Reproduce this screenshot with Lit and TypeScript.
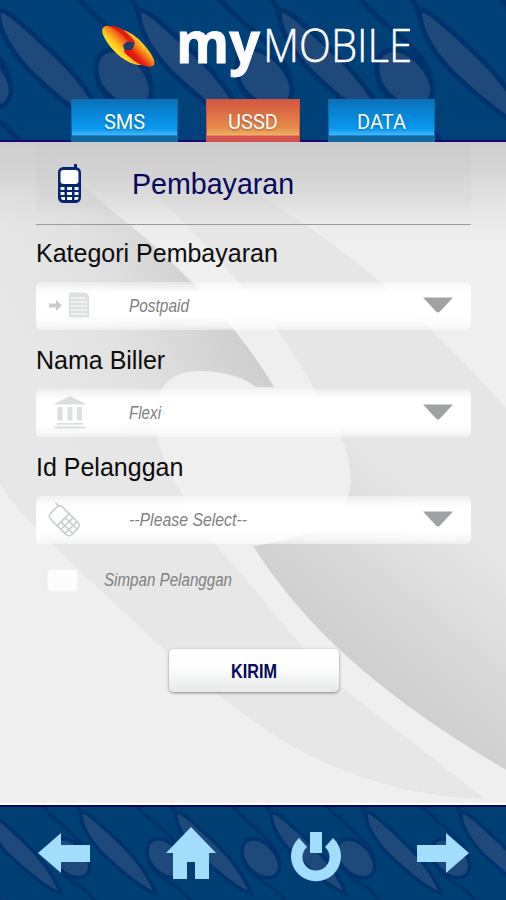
import { LitElement, html, svg, css } from "lit";
import { customElement, property } from "lit/decorators.js";

@customElement("leaf-pattern")
class LeafPattern extends LitElement {
  @property({ type: Number }) scale = 1;
  @property({ type: Number }) period = 140.5;
  @property({ type: Number }) dx = 0;
  @property({ type: Number }) dy = 0;

  static styles = css`
    :host { display: block; overflow: hidden; }
    svg { display: block; width: 100%; height: 100%; }
    .line { fill: none; stroke: #00326d; stroke-width: 5; }
    .leaf { fill: #20497b; stroke: #00326d; stroke-width: 5; }
  `;

  render() {
    return html`<svg aria-hidden="true">
      ${[-2, -1, 0, 1, 2, 3, 4, 5].map(
        (k) => svg`<g transform="translate(${this.dx + k * this.period} ${this.dy}) scale(${this.scale})">
          <path class="line" d="M-64 -16 C-50 0 -44 4 -34 13 C-18 27 4 44 9 66"/>
          <path class="line" d="M-43 70 C-34 88 -18 98 -2 108 C14 120 26 134 40 156"/>
          <path class="line" d="M-14 -18 C-6 -10 -3 -4 -2 4"/>
          <path class="leaf" d="M-2 -3 C5 -3 12 3 20 10 C44 32 88 66 109 118 C90 112 56 84 29 58 C10 38 -4 14 -2 -3 Z"/>
          <path class="leaf" d="M-45 56 C-46 38 -30 32 -14 41 C2 50 13 70 10 82 C6 99 -14 96 -27 87 C-38 79 -45 68 -45 56 Z"/>
        </g>`
      )}
    </svg>`;
  }
}

@customElement("slim-text")
class SlimText extends LitElement {
  @property() text = "";
  @property({ type: Number }) width = 60;
  static styles = css`
    :host { display: block; height: 26px; }
    svg { display: block; height: 26px; overflow: visible; }
    text { font: italic 18.5px "Liberation Sans", Arial, sans-serif; fill: #808080; }
  `;
  render() {
    return html`<svg width=${this.width}>
      <text x="0" y="18.500" textLength=${this.width} lengthAdjust="spacingAndGlyphs">${this.text}</text>
    </svg>`;
  }
}

const noteIcon = svg`
  <path fill="#c9cccc" d="M2 21.500h7v-3.500l6 5.500-6 5.500v-3.500H2z"/>
  <path fill="#dfe1e1" d="M22 10.500h17l3 3v22H22z"/>
  <path stroke="#f6f7f7" stroke-width="1.4" d="M24 16h14M24 20h16M24 24h16M24 28h16M24 32h16"/>`;
const bankIcon = svg`
  <path fill="#dcdfdf" d="M23 7 38 14.5v1H8v-1zM10.500 18h5v13.500h-5zM20.500 18h5v13.500h-5zM30 18h5v13.500h-5zM10 34h26v1.800H10zM7.500 37.500h31v2h-31z"/>`;
const mobileIcon = svg`
  <g transform="translate(15.500 23) rotate(-45)" fill="none" stroke="#cbcfcf" stroke-width="1.700">
    <rect x="-8.500" y="-12.500" width="17" height="30" rx="4"/>
    <path d="M-8 1H8M-8 6.500H8M-8 12H8M-3 1v16M3 1v16M6.500 -12.500v-4"/>
  </g>`;

const fields = [
  { label: "Kategori Pembayaran", value: "Postpaid", width: 60, icon: noteIcon },
  { label: "Nama Biller", value: "Flexi", width: 32, icon: bankIcon },
  { label: "Id Pelanggan", value: "--Please Select--", width: 118, icon: mobileIcon },
];

const tabs = [
  { name: "SMS", cls: "tab wide" },
  { name: "USSD", cls: "tab active" },
  { name: "DATA", cls: "tab wide" },
];

@customElement("app-root")
class AppRoot extends LitElement {
  static styles = css`
    :host {
      display: flex; flex-direction: column; width: 506px; height: 900px;
      overflow: hidden; background: #efefef;
      font-family: "Liberation Sans", Arial, sans-serif;
    }
    header { display: grid; height: 142px; background: #00417a; flex: none; }
    header > *, main > *, footer > * { grid-area: 1 / 1; min-width: 0; }
    .head { display: flex; flex-direction: column; justify-content: space-between; border-bottom: 2px solid #16086c; }
    .brand { width: 506px; height: 90px; display: block; }
    .my { font: 700 58px "Open Sans", "Noto Sans", sans-serif; fill: #fff; stroke: #fff; stroke-width: .8; }
    .mobile { font: 300 46px "Open Sans", "Noto Sans", sans-serif; fill: #fff; stroke: #fff; stroke-width: .5; }
    .tabs { display: flex; gap: 28px; padding-left: 71px; margin-bottom: -2px; }
    .tab {
      width: 94px; height: 43px; box-sizing: border-box; padding-top: 2px;
      font: 20px/43px Roboto, sans-serif; color: #fff; text-align: center;
      text-shadow: 0 1px 2px rgba(0, 0, 0, .3);
    }
    .wide { width: 107px; background: linear-gradient(#0a70b5 0, #0786d6 35%, #0598ee 68%, #3fb4fb 83%, #1169a4 86%, #1169a4 100%); box-shadow: inset 1px 0 #1169a4, inset -1px 0 #1169a4; }
    .active { background: linear-gradient(#d2563f 0, #dd7144 35%, #e68c49 68%, #edb063 83%, #d5534d 87%, #cf504f 100%); box-shadow: inset 1px 0 #cf504f, inset -1px 0 #cf504f; }
    main { display: grid; height: 661px; flex: none; }
    .swirl { display: block; width: 506px; height: 661px; }
    .form { display: flex; flex-direction: column; padding: 0 35px 0 36px; }
    .title {
      display: flex; align-items: center; height: 83px; box-sizing: border-box;
      border-bottom: 1.500px solid #999; padding-left: 20px; gap: 50px;
      background: linear-gradient(rgba(0,0,0,.01), rgba(0,0,0,.025) 75%, transparent 90%);
      font-size: 28.600px; color: #05075c;
    }
    .title svg { margin-top: 2px; }
    .title span { line-height: 83px; padding-top: 2px; }
    .group { height: 107px; }
    .label { height: 57px; line-height: 56px; font-size: 25px; color: #0c0c0c; white-space: nowrap; }
    .field {
      display: flex; align-items: center; height: 48px; box-sizing: border-box;
      padding: 0 18px 0 11px; border-radius: 5px;
      background: linear-gradient(rgba(255,255,255,.35), #fff 22%, #fff 70%, rgba(255,255,255,.7) 92%, rgba(255,255,255,.4));
    }
    .field slim-text { margin: 0 auto 0 37px; }
    .arrow { margin-top: -2px; }
    .check { display: flex; align-items: center; height: 68px; padding-left: 12px; gap: 27px; }
    .box { width: 29px; height: 21px; border-radius: 4px; background: #fcfcfc; box-shadow: 0 0 2px #fff; }
    .send {
      align-self: center; width: 170px; height: 43px; margin: 35px 0 0 0; padding: 0; border: 0;
      border-radius: 5px; background: linear-gradient(#fff, #fdfdfd 45%, #e7e9ea);
      box-shadow: 0 1px 3px rgba(0,0,0,.45);
    }
    .send svg { display: block; margin: 0 auto; overflow: visible; }
    .send text { font: 700 19.500px "Liberation Sans", Arial, sans-serif; fill: #05075c; }
    footer { display: grid; height: 97px; box-sizing: border-box; flex: none; border-top: 2px solid #fff; background: #003f73; }
    .nav { display: flex; align-items: center; justify-content: space-between; padding: 0 37px 1px 38px; border-top: 2px solid #060560; }
    .nav svg { fill: #a2ddfc; }
    .power { margin-top: 7px; }
  `;

  render() {
    return html`
      <header>
        <leaf-pattern .dx=${141} .dy=${13}></leaf-pattern>
        <div class="head">
          <svg class="brand">
            <defs>
              <linearGradient id="a" gradientUnits="userSpaceOnUse" x1="108" y1="48" x2="124" y2="32">
                <stop offset="0" stop-color="#fff22e"/><stop offset=".4" stop-color="#ffbe1e"/>
                <stop offset=".8" stop-color="#f0501a"/><stop offset="1" stop-color="#dc1410"/>
              </linearGradient>
              <linearGradient id="b" gradientUnits="userSpaceOnUse" x1="149" y1="46" x2="133" y2="62">
                <stop offset="0" stop-color="#fff22e"/><stop offset=".3" stop-color="#ffa01c"/>
                <stop offset=".7" stop-color="#e8200f"/><stop offset="1" stop-color="#d81010"/>
              </linearGradient>
            </defs>
            <path fill="url(#a)" d="M103 28 C106 23 120 27 129 36 L133 42 C127 40 122 44 124 49 L142 65 C129 66 114 53 107 42 C103 36 101 31 103 28Z"/>
            <path fill="#df1c10" d="M108 26 C120 25 131 33 137 43 L128 42 C126 36 117 30 108 26Z"/>
            <path fill="url(#b)" d="M123 30 C133 33 140 40 145 46 C151 53 156 61 154 65 C151 69 139 65 133 60 C129 56 124 54 124 50 L131 50 C134 47 134 45 135 42 C132 37 128 34 123 30Z"/>
            <path fill="#263b68" d="M123 45 L128 42 L131 43 L134 43 L132 49 L126 50Z"/>
            <text class="my" x="176" y="62.500" textLength="84" lengthAdjust="spacingAndGlyphs">my</text>
            <text class="mobile" x="263" y="62" textLength="149" lengthAdjust="spacingAndGlyphs">MOBILE</text>
          </svg>
          <div class="tabs">${tabs.map((t) => html`<div class=${t.cls}>${t.name}</div>`)}</div>
        </div>
      </header>
      <main>
        <svg class="swirl" viewBox="0 142 506 661" aria-hidden="true">
          <defs>
            <linearGradient id="l" gradientUnits="userSpaceOnUse" x1="20" y1="360" x2="220" y2="270">
              <stop offset="0" stop-color="#e8e8e8"/><stop offset=".45" stop-color="#e1e1e1"/><stop offset="1" stop-color="#cecece"/>
            </linearGradient>
            <linearGradient id="lf" gradientUnits="userSpaceOnUse" x1="0" y1="380" x2="0" y2="480">
              <stop offset="0" stop-color="#e7e7e7" stop-opacity="0"/><stop offset="1" stop-color="#e7e7e7"/>
            </linearGradient>
            <linearGradient id="r" gradientUnits="userSpaceOnUse" x1="325" y1="640" x2="440" y2="500">
              <stop offset="0" stop-color="#cfcfcf"/><stop offset=".5" stop-color="#dadada"/><stop offset="1" stop-color="#e6e6e6"/>
            </linearGradient>
            <linearGradient id="t" x1="0" y1="0" x2="0" y2="1">
              <stop offset="0" stop-color="#cecece"/><stop offset=".35" stop-color="#d4d4d4" stop-opacity=".85"/><stop offset="1" stop-color="#e6e6e6" stop-opacity="0"/>
            </linearGradient>
          </defs>
          <path fill="#efefef" d="M0 142H506V803H0Z"/>
          <path fill="url(#l)" d="M0 142H40C90 195 110 208 130 225C190 275 240 330 274 387L300 640C345 690 410 740 483 798C400 797 310 765 250 718C170 660 150 635 90 580C60 552 25 520 0 485Z"/>
          <path fill="url(#lf)" d="M0 380H270L300 640C345 690 410 740 483 798C400 797 310 765 250 718C170 660 150 635 90 580C60 552 25 520 0 485Z"/>
          <path fill="url(#r)" d="M120 160C190 228 270 305 313 387L332 430L330 520L253 546C300 620 370 690 506 770V408C440 335 370 265 290 215C260 195 240 180 190 142H120Z"/>
          <path fill="#efefef" d="M158 440C150 400 160 371 200 371C225 371 245 378 256 387H313C326 410 351 440 351 480C351 520 300 540 253 546C300 620 370 690 506 770V803H490L345 690C290 640 250 580 218 548C190 510 165 470 158 440Z"/>
          <rect y="142" width="506" height="105" fill="url(#t)"/>
        </svg>
        <div class="form">
          <div class="title">
            <svg width="26" height="42">
              <path fill="#06246f" d="M18 1h3v7h-3z"/>
              <rect x="2" y="4" width="23" height="36" rx="5.500" fill="#06246f"/>
              <rect x="4.500" y="7" width="18" height="14" rx="3" fill="#fff"/>
              <path fill="#f4f8ff" d="M4.500 24h4v3h-4zM11 24h5v3h-5zM18.500 24h4v3h-4zM4.500 29h4v3h-4zM11 29h5v3h-5zM18.500 29h4v3h-4zM5 34h4v3H7q-2 0-2-3zM11 34h5v3h-5zM18.500 34h4q0 3-2 3h-2z"/>
            </svg>
            <span>Pembayaran</span>
          </div>
          ${fields.map((f) => html`
            <div class="group">
              <div class="label">${f.label}</div>
              <div class="field">
                <svg width="45" height="48">${f.icon}</svg>
                <slim-text .text=${f.value} .width=${f.width}></slim-text>
                <svg class="arrow" width="30" height="16"><path fill="#a0a2a4" d="M0 .5h30L17 14.500q-2 2-4 0z"/></svg>
              </div>
            </div>`)}
          <div class="check">
            <div class="box"></div>
            <slim-text text="Simpan Pelanggan" .width=${128}></slim-text>
          </div>
          <button class="send">
            <svg width="50" height="26"><text x="2" y="20" textLength="46" lengthAdjust="spacingAndGlyphs">KIRIM</text></svg>
          </button>
        </div>
      </main>
      <footer>
        <leaf-pattern .dx=${82.5} .dy=${9} .scale=${0.675} .period=${95}></leaf-pattern>
        <div class="nav">
          <svg width="52" height="40"><path d="M0 20 23 0v12h29v17H23v11z"/></svg>
          <svg width="50" height="52"><path d="M25 0 50 26h-7v26H29V35h-8v17H7V26H0z"/></svg>
          <svg class="power" width="50" height="50">
            <path d="M19 0h12v21H19z"/>
            <path d="M8 6 16 15A13.500 13.500 0 1 0 34 15L42 6A25 25 0 1 1 8 6z"/>
          </svg>
          <svg width="52" height="40"><path d="M52 20 29 0v12H0v17h29v11z"/></svg>
        </div>
      </footer>`;
  }
}
